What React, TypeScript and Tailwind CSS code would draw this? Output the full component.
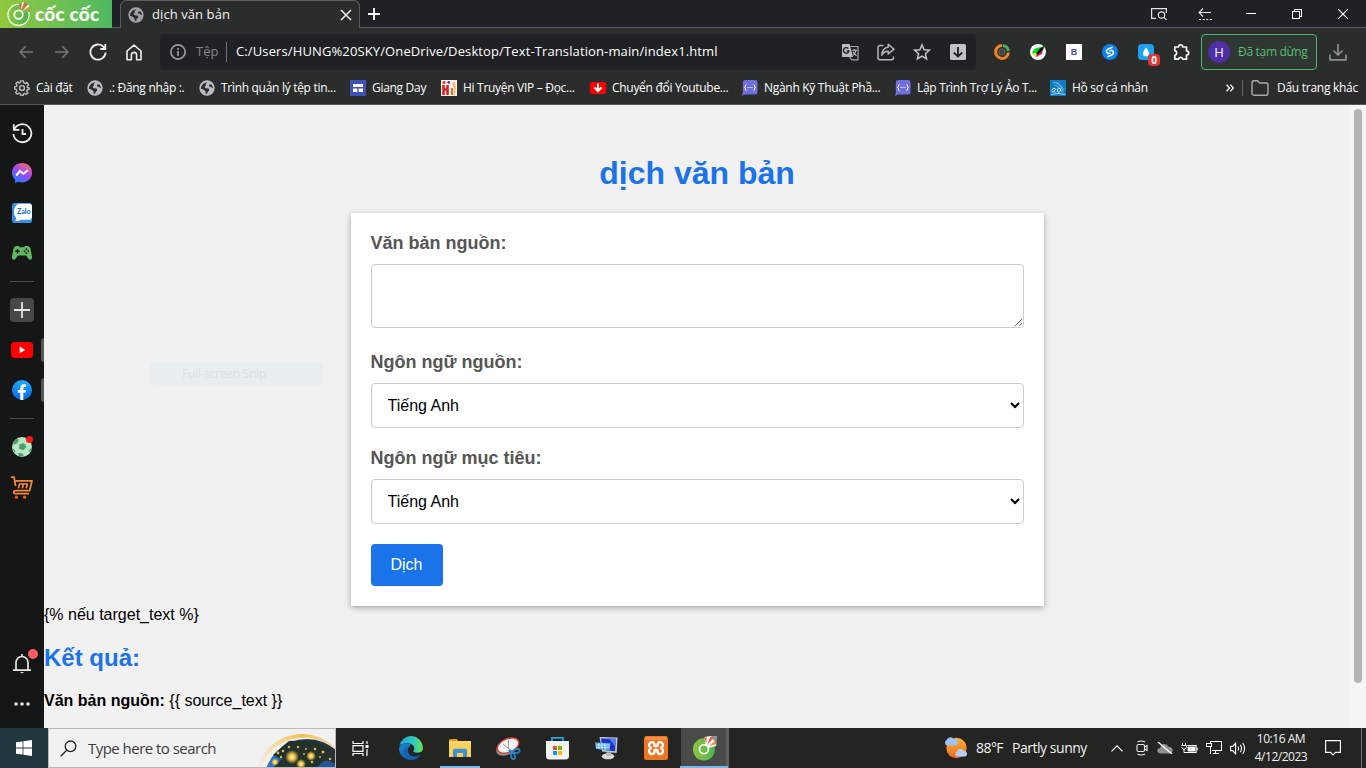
import React from "react";

type Kids = { children?: React.ReactNode };

function Slot({ children }: Kids) {
  return <div className="flex h-9 w-9 shrink-0 items-center justify-center">{children}</div>;
}

function Globe({ color = "#b9bcc4" }: { color?: string }) {
  return (
    <svg width="16" height="16" viewBox="0 0 16 16" className="shrink-0">
      <circle cx="8" cy="8" r="7.2" fill={color} />
      <path d="M8.2 2.2 6.6 4.2 7.2 5.4 5.4 6.8 6.6 8.2 9.6 8.6 10.4 10.4 8.8 11.6 8.2 13.8 6.4 13.4 6.6 11.2 4.2 9.4 2 8.8 2.2 6.4 4.4 3.4Z" fill="#2b2d2c" />
      <path d="M10 4.6 12.6 4.4 13.8 6.8 13.6 8.2 12 7 10.2 6.6Z" fill="#2b2d2c" />
      <circle cx="8" cy="8" r="6.9" fill="none" stroke={color} strokeWidth="1.5" />
    </svg>
  );
}

function CocMark({ size, white = false }: { size: number; white?: boolean }) {
  return (
    <svg width={size} height={size} viewBox="0 0 24 24" className="shrink-0">
      <defs>
        <linearGradient id="leaf" x1="0" y1="0" x2="1" y2="0">
          <stop offset="0" stopColor="#8fc63f" />
          <stop offset="1" stopColor="#46b450" />
        </linearGradient>
      </defs>
      <circle cx="11.5" cy="12.8" r="10.6" fill="url(#leaf)" stroke="#fff" strokeWidth={white ? 1.1 : 0} />
      <path d="M13 9 12 1 18 0 24 0 23.5 9.5 15 11.5Z" fill={white ? "#74be57" : "#fff"} />
      <path d="M18.5 0H24V10.5L23 9.8Q22 4 18.5 2Z" fill={white ? "#74be57" : "#494a49"} opacity=".6" />
      <circle cx="11.5" cy="12.6" r="4.3" fill="none" stroke="#fff" strokeWidth="1.7" />
      <path d="M12 1.5 14.4 1.2 13.6 7.4Z" fill="#f15a3a" />
      <path d="M17.4 .8 20.6 2 14.8 8.4Z" fill="#f15a3a" />
      <path d="M21.8 4.8 23 7.6 16.2 9.8Z" fill="#f58a3a" />
      {white && <path d="M15 .6 17 .6 14.2 7.6ZM21.2 2.4 22.4 4.2 15.6 9Z" fill="#fff" />}
    </svg>
  );
}

function TitleBar() {
  return (
    <header className="flex h-7 shrink-0 bg-[#202124]">
      <div className="flex w-28 items-center bg-linear-to-r from-[#91c83e] to-[#4cb960] pl-[7px]">
        <CocMark size={24} white />
        <span className="ml-1 whitespace-nowrap font-[Lato] text-[19px] leading-7 font-black tracking-[0.2px] text-white">cốc cốc</span>
      </div>
      <div className="w-2 border-b border-[#5c5e60]" />
      <div className="flex w-60 items-center rounded-t-md border border-b-0 border-[#5c5e60] bg-[#2b2d2c] pl-[7px] pr-[7px]">
        <Globe color="#9fa1a6" />
        <span className="ml-2 flex-1 whitespace-nowrap text-[13px] tracking-[0.08px] text-[#f1f1f1]">dịch văn bản</span>
        <svg width="12" height="12" viewBox="0 0 12 12" stroke="#f0f0f0" strokeWidth="1.5"><path d="M1 1 11 11M11 1 1 11" /></svg>
      </div>
      <div className="flex flex-1 items-center border-b border-[#5c5e60] pl-2">
        <svg width="12" height="12" viewBox="0 0 12 12" stroke="#fff" strokeWidth="1.8"><path d="M6 0V12M0 6H12" /></svg>
        <div className="ml-auto flex">
          <div className="flex w-[46px] justify-center">
            <svg width="18" height="14" viewBox="0 0 18 14" fill="none" stroke="#e4e4e4" strokeWidth="1.2"><path d="M6 11.4H1.6V1.6H16.4V6" /><circle cx="11.5" cy="8" r="3.2" /><path d="m14 10.3 2.6 2.6" /></svg>
          </div>
          <div className="flex w-[46px] justify-center">
            <svg width="14" height="14" viewBox="0 0 14 14" fill="none" stroke="#e4e4e4" strokeWidth="1.1"><path d="M13 5.5H1M5 1.5 1 5.5 5 9.5" /><path d="M1 12.5H14" strokeDasharray="2.2 1.4" /></svg>
          </div>
          <div className="flex w-[46px] items-center justify-center"><div className="h-px w-2.5 bg-white" /></div>
          <div className="flex w-[46px] items-center justify-center">
            <svg width="10" height="10" viewBox="0 0 10 10" fill="none" stroke="#fff" shapeRendering="crispEdges"><path d="M.5 2.5H7.5V9.5H.5ZM2.5 2.5V.5H9.5V7.5H7.5" /></svg>
          </div>
          <div className="flex w-[46px] items-center justify-center">
            <svg width="10" height="10" viewBox="0 0 10 10" stroke="#fff" strokeWidth="1.1"><path d="M0 0 10 10M10 0 0 10" /></svg>
          </div>
        </div>
      </div>
    </header>
  );
}

function Toolbar() {
  return (
    <div className="flex h-12 shrink-0 items-center pl-2 pr-[10px]">
      <Slot><svg width="14" height="14" viewBox="0 0 14 14" fill="none" stroke="#747675" strokeWidth="1.5"><path d="M14 7H1M7 1 1 7 7 13" /></svg></Slot>
      <Slot><svg width="14" height="14" viewBox="0 0 14 14" fill="none" stroke="#747675" strokeWidth="1.5"><path d="M0 7H13M7 1 13 7 7 13" /></svg></Slot>
      <Slot><svg width="18" height="18" viewBox="0 0 18 18" fill="none" stroke="#eee" strokeWidth="1.8"><path d="M16.6 9.5A7.6 7.6 0 1 1 14.6 3.9L16 5.4" /><path d="M16.3 1V6H11.3" /></svg></Slot>
      <Slot><svg width="16" height="17" viewBox="0 0 16 17" fill="none" stroke="#eee" strokeWidth="1.6" strokeLinejoin="round"><path d="M1 7 8 1.2 15 7V15.8H10.6V11A2.6 2.6 0 0 0 5.4 11V15.8H1Z" /></svg></Slot>
      <div className="ml-2 flex h-9 w-[816px] shrink-0 items-center rounded bg-[#202124]">
        <Slot><svg width="16" height="16" viewBox="0 0 16 16" fill="none" stroke="#9a9c9f" strokeWidth="1.7"><circle cx="8" cy="8" r="7.1" /><path d="M8 7V12M8 4V5.7" /></svg></Slot>
        <span className="w-[30px] text-[13px] text-[#85878a]">Tệp</span>
        <div className="h-5 w-px bg-[#707274]" />
        <span className="ml-[9px] flex-1 whitespace-nowrap text-[13px] tracking-[0.12px] text-white">C:/Users/HUNG%20SKY/OneDrive/Desktop/Text-Translation-main/index1.html</span>
        <Slot>
          <svg width="18" height="18" viewBox="0 0 18 18"><path d="M1.6 1H8.7L12 14H1.6Q1 14 1 13.4V1.6Q1 1 1.6 1Z" fill="#bdbdbd" /><path d="M9.6 3.5H17V16.8H10.8L8.6 14.2" fill="none" stroke="#a9a9a9" strokeWidth="1.2" /><path d="M7.4 5.6A2.8 2.8 0 1 0 8 7.9H5.4" fill="none" stroke="#202124" strokeWidth="1.4" /><path d="M11 7.3H16M13.3 5.9V7.3M15 7.3Q14.3 10.5 12 12.4M11.9 8.9 15.5 12.8" fill="none" stroke="#bdbdbd" strokeWidth="1.1" /></svg>
        </Slot>
        <Slot>
          <svg width="18" height="18" viewBox="0 0 18 18" fill="none" stroke="#b8b8b8" strokeWidth="1.5" strokeLinejoin="round"><path d="M6.5 2.5H3A2 2 0 0 0 1 4.5V14.8A2 2 0 0 0 3 16.8H14.5A2 2 0 0 0 16.5 14.8V13.5" /><path d="M11.2 1.2 17 6.2 11.2 11V8.3Q7.3 8 4.8 12.2 5.4 4.7 11.2 4.2Z" /></svg>
        </Slot>
        <Slot><svg width="18" height="18" viewBox="0 0 18 18" fill="none" stroke="#c4c4c4" strokeWidth="1.5"><path d="m9 1.8 2.1 5 5.3.4-4 3.5 1.2 5.2L9 13.1l-4.6 2.8 1.2-5.2-4-3.5 5.3-.4Z" /></svg></Slot>
        <Slot><svg width="16" height="16" viewBox="0 0 16 16"><rect width="16" height="16" rx="1.5" fill="#c2c2c2" /><path d="M8 3V12.5M3.8 8.5 8 12.6 12.2 8.5" fill="none" stroke="#202124" strokeWidth="1.8" /></svg></Slot>
      </div>
      <div className="ml-2 flex">
        <Slot><svg width="16" height="16" viewBox="0 0 16 16"><g fill="none" strokeWidth="3"><path d="M8 1.6A6.4 6.4 0 1 0 14.4 8.5" stroke="#f58220" /><path d="M8.8 1.6A6.4 6.4 0 0 1 14.4 7" stroke="#4caf50" /></g><circle cx="8" cy="8" r="3.6" fill="#5a5f63" /><ellipse cx="8" cy="8" rx="1.4" ry="2.1" fill="none" stroke="#2b2d2c" /></svg></Slot>
        <Slot><svg width="16" height="16" viewBox="0 0 16 16"><circle cx="8" cy="8" r="8" fill="#fff" /><path d="M2 9.5Q3 4 9 3.6L13.8 2.2 8 9Z" fill="#00d82c" /><path d="M2.2 10 6.4 8.4 5.6 12.5Z" fill="#fff000" /><path d="M5.5 13.5 8 8 13.4 3.5 12 10Z" fill="#f0146e" /><path d="M5.8 10.2 9.6 4.8 14 2 13.2 5.6 8 10.6Z" fill="#111" /></svg></Slot>
        <Slot><div className="flex h-4 w-4 items-center justify-center bg-white font-['Liberation_Sans'] text-[9px] leading-4 font-bold text-[#5046b0]">B</div></Slot>
        <Slot><svg width="16" height="16" viewBox="0 0 16 16"><circle cx="8" cy="8" r="8" fill="#0a84f5" /><g transform="rotate(14 8 8)" fill="none" stroke="#fff" strokeWidth="1.6" strokeLinecap="round"><path d="M8.8 3.2 5.6 5.4Q3.4 7.3 5.2 9.2 6.6 10.4 8.2 9.2" /><path d="M7.2 12.8 10.4 10.6Q12.6 8.7 10.8 6.8 9.4 5.6 7.8 6.8" /></g></svg></Slot>
        <Slot>
          <div className="relative h-4 w-4 rounded-sm bg-[#1da1f2]">
            <svg width="16" height="16" viewBox="0 0 16 16"><path d="M8 3.5Q11 7.5 11 9.4A3 3 0 0 1 5 9.4Q5 7.5 8 3.5Z" fill="#fff" /></svg>
            <div className="absolute top-2.5 left-2.5 flex h-3 w-3 items-center justify-center rounded-sm bg-[#e53535] text-[10px] leading-3 font-bold text-white">0</div>
          </div>
        </Slot>
        <Slot><svg width="18" height="18" viewBox="0 0 18 18" fill="none" stroke="#f2f2f2" strokeWidth="1.7" strokeLinejoin="round"><path d="M1.8 4H5.5A2.1 2.1 0 0 1 9.7 4H13.5V7.8A2.2 2.2 0 0 1 13.5 12.2V16.2H9.9A2.3 2.3 0 0 0 5.4 16.2H1.8V12.4A2.4 2.4 0 0 0 1.8 7.7Z" /></svg></Slot>
      </div>
      <div className="ml-px flex h-9 w-[116px] shrink-0 items-center rounded border border-[#52b36b] bg-[#2e3731] pl-1.5">
        <div className="flex h-[22px] w-[22px] items-center justify-center rounded-full bg-[#512da8] text-[13px] leading-none text-white">H</div>
        <span className="ml-2 whitespace-nowrap text-xs tracking-[-0.3px] text-[#5bbd74]">Đã tạm dừng</span>
      </div>
      <div className="ml-3 flex"><svg width="18" height="17" viewBox="0 0 18 17" fill="none" stroke="#8d8f8e" strokeWidth="1.7"><path d="M9 0V10.5M4.5 6.5 9 11 13.5 6.5M1 10.5V15.8H17V10.5" /></svg></div>
    </div>
  );
}

const CodeIcon = () => (
  <svg width="16" height="16" viewBox="0 0 16 16" className="shrink-0"><path d="M3 0H13Q15.5 0 15.5 2.5V12Q15.5 14.5 13 14.5H3L0 16 .8 13V2.5Q.8 0 3 0Z" fill="#6f6fe0" /><path d="M4.5 4.5Q3.4 4.5 3.4 6 3.4 7.5 2.4 7.5 3.4 7.5 3.4 9 3.4 10.5 4.5 10.5M11.5 4.5Q12.6 4.5 12.6 6 12.6 7.5 13.6 7.5 12.6 7.5 12.6 9 12.6 10.5 11.5 10.5M5.6 7.5H6.6M7.5 7.5H8.5M9.4 7.5H10.4" fill="none" stroke="#fff" /></svg>
);

function Mark({ icon, w, children }: Kids & { icon: React.ReactNode; w: string }) {
  return (
    <div className="flex shrink-0 items-center gap-1.5">
      {icon}
      <span className={`${w} whitespace-nowrap`}>{children}</span>
    </div>
  );
}

function Bookmarks() {
  return (
    <div className="flex h-[29px] shrink-0 gap-[14px] border-b border-[#565857] pl-[14px] pb-[5px] text-xs tracking-[-0.3px] text-white">
      <Mark w="w-[37px]" icon={
        <svg width="16" height="16" viewBox="0 0 18 18" fill="none" stroke="#b9bab9" strokeWidth="1.6" strokeLinejoin="round"><path d="M7.4 1H10.6L11 3.2 12.8 4 14.6 2.7 16.3 5.4 14.8 7 15 8.2 17 9 17 10.4 15 11 14.3 12.8 15.6 14.6 13.6 16.3 11.9 15.1 10.7 15.6 10.3 17.3H7.6L7.2 15.4 5.6 14.7 3.8 15.9 1.9 14 3.2 12.2 2.6 10.6.8 10.2V7.6L2.8 7.2 3.4 5.7 2.2 3.9 4.2 2.1 5.8 3.4 7 2.9Z" /><circle cx="9" cy="9.1" r="2.8" /></svg>
      }>Cài đặt</Mark>
      <Mark w="w-[76px]" icon={<Globe />}>.: Đăng nhập :.</Mark>
      <Mark w="w-[115px]" icon={<Globe />}>Trình quản lý tệp tin...</Mark>
      <Mark w="w-[55px]" icon={<svg width="16" height="16" viewBox="0 0 16 16"><path fill="#3f51b5" d="M0 0H16V16H0Z" /><path fill="#fff" d="M3 4H13V7H3ZM3 8.5H7.3V12H3ZM8.7 8.5H13V12H8.7Z" /></svg>}>Giang Day</Mark>
      <Mark w="w-[113px]" icon={<svg width="16" height="16" viewBox="0 0 16 16"><path fill="#fff4ea" d="M0 0H16V16H0Z" /><path d="M2.5 5V15M2.5 9.5H7.5M6.5 5V15" stroke="#d8232a" strokeWidth="2.6" /><path d="M11 8V15" stroke="#e8741e" strokeWidth="2" /><circle cx="3" cy="2.5" r="1.6" fill="#e8332a" /><circle cx="7.8" cy="2.4" r="1.4" fill="#6b2b8e" /><path d="M11 3 14 2 14.8 7 14 15H12.5L13 8Z" fill="#f2b07a" /></svg>}>Hi Truyện VIP – Đọc...</Mark>
      <Mark w="w-[116px]" icon={<svg width="16" height="16" viewBox="0 0 16 16"><rect y="2" width="16" height="12" rx="2" fill="#f00" /><path d="M8 3.5V10M4.5 7.5 8 11 11.5 7.5" stroke="#fff" strokeWidth="2" fill="none" /></svg>}>Chuyển đổi Youtube...</Mark>
      <Mark w="w-[117px]" icon={<CodeIcon />}>Ngành Kỹ Thuật Phầ...</Mark>
      <Mark w="w-[119px]" icon={<CodeIcon />}>Lập Trình Trợ Lý Ảo T...</Mark>
      <Mark w="w-[76px]" icon={<svg width="16" height="16" viewBox="0 0 16 16"><path fill="#0f7cc0" d="M0 0H16V16H0Z" /><path d="M3 2Q10 3 13.5 12M6 2Q11 4 14 10M4 5Q10 6 12.5 13" stroke="#6bb8e6" fill="none" strokeWidth=".9" /><path d="M1 14.4Q8 12.6 15 14.4" stroke="#cfe8f7" fill="none" strokeWidth=".8" /><path d="M5.5 12Q1.5 12.4 1.8 10.2 2.6 8 5 8.4 6.6 9.4 4 10.6M9 12.4Q6.5 11.6 7.3 9.4 8.6 7.4 10.3 8.8 11.2 11.4 9 12.4Z" stroke="#fff" fill="none" strokeWidth=".9" /></svg>}>Hồ sơ cá nhân</Mark>
      <div className="ml-auto flex items-center pr-2">
        <svg width="8" height="8" viewBox="0 0 8 8" fill="none" stroke="#eee" strokeWidth="1.4"><path d="M.5.8 3.5 4 .5 7.2M4.3.8 7.3 4 4.3 7.2" /></svg>
        <div className="ml-2 h-4 w-px bg-[#606261]" />
        <svg width="18" height="16" viewBox="0 0 18 16" fill="none" stroke="#a9abaa" strokeWidth="1.4" className="mx-2 shrink-0"><path d="M1 3Q1 .8 3 .8H6.5L8.5 3H15Q17 3 17 5V13Q17 15.2 15 15.2H3Q1 15.2 1 13Z" /></svg>
        <span className="w-[81px] whitespace-nowrap tracking-[-0.27px]">Dấu trang khác</span>
      </div>
    </div>
  );
}

function SideItem({ children, pill = false }: Kids & { pill?: boolean }) {
  return (
    <div className="relative flex h-10 w-11 shrink-0 items-center justify-center">
      {children}
      {pill && <div className="absolute right-0 top-2 h-6 w-[3px] rounded-l bg-[#555756]" />}
    </div>
  );
}

function Sidebar() {
  return (
    <nav className="flex w-11 shrink-0 flex-col bg-[#151716] pt-2 pb-1">
      <SideItem><svg width="21" height="21" viewBox="0 0 21 21" fill="none" stroke="#ececec" strokeWidth="1.8"><path d="M2.2 6.4A9 9 0 1 1 1.4 11" /><path d="M1.8 1.2V6.8H7.4M10.5 6V11H14" /></svg></SideItem>
      <SideItem>
        <svg width="20" height="20" viewBox="0 0 20 20"><defs><linearGradient id="msg" x1=".2" y1="1" x2=".8" y2="0"><stop stopColor="#1387ff" /><stop offset=".5" stopColor="#a044f5" /><stop offset="1" stopColor="#ff6a72" /></linearGradient></defs><path d="M10 0C4.2 0 0 4.2 0 9.7 0 12.6 1.2 15 3.1 16.7V20L6.5 18.8C7.6 19.2 8.8 19.4 10 19.4 15.8 19.4 20 15.2 20 9.7S15.8 0 10 0Z" fill="url(#msg)" /><path d="M4.2 12.5 8 8 11.4 10.7 15.8 7.2" fill="none" stroke="#fff" strokeWidth="2.1" /></svg>
      </SideItem>
      <SideItem>
        <svg width="20" height="20" viewBox="0 0 20 20"><rect width="20" height="20" rx="2.5" fill="#3a8fdd" /><path d="M6.5 .8H17Q20 .8 20 4V13Q20 16.8 17 16.8H9Q5.5 18.6 3.2 17.8 5 16.8 4 15 1.6 12 2 8 2.2 3 6.5 .8Z" fill="#fff" /><text x="5" y="11.4" fontSize="7.2" fontWeight="900" fill="#1b74d0" fontFamily="Lato" textLength="13.6">Zalo</text></svg>
      </SideItem>
      <SideItem>
        <svg width="20" height="14" viewBox="0 0 20 14"><path d="M5 0H7Q7.5 1.2 8.5 1.2H11.5Q12.5 1.2 13 0H15Q18 0 18.6 3L20 11Q20 13.8 18 13.8 16.6 13.5 14.2 9.4H5.8Q3.4 13.5 2 13.8 0 13.8 0 11L1.4 3Q2 0 5 0Z" fill="#5fba60" /><path d="M5.5 3V7.4M3.3 5.2H7.7" stroke="#151716" strokeWidth="1.5" /><g fill="#151716"><circle cx="14.3" cy="3.2" r=".9" /><circle cx="14.3" cy="7" r=".9" /><circle cx="12.4" cy="5.1" r=".9" /><circle cx="16.2" cy="5.1" r=".9" /></g></svg>
      </SideItem>
      <div className="flex h-[17px] items-center justify-center"><div className="h-px w-6 bg-[#4b4d4c]" /></div>
      <SideItem><div className="flex h-6 w-6 items-center justify-center rounded bg-[#464847]"><svg width="16" height="16" viewBox="0 0 16 16" stroke="#e6e6e6" strokeWidth="1.8"><path d="M8 0V16M0 8H16" /></svg></div></SideItem>
      <SideItem pill><svg width="22" height="16" viewBox="0 0 22 16"><rect width="22" height="16" rx="3.5" fill="#f00" /><path d="M8.7 4.6 14.2 8 8.7 11.2Z" fill="#fff" /></svg></SideItem>
      <SideItem pill><svg width="20" height="20" viewBox="0 0 20 20"><defs><linearGradient id="fb" x2="0" y2="1"><stop stopColor="#1fadfb" /><stop offset="1" stopColor="#0866e6" /></linearGradient></defs><circle cx="10" cy="10" r="10" fill="url(#fb)" /><path d="M8.3 20V12.8H5.8V9.9H8.3V7.8Q8.3 4.2 11.8 4.2 12.9 4.2 14 4.4V7H12.6Q11.3 7 11.3 8.3V9.9H13.9L13.4 12.8H11.3V20Z" fill="#fff" /></svg></SideItem>
      <div className="flex h-[17px] items-center justify-center"><div className="h-px w-6 bg-[#4b4d4c]" /></div>
      <SideItem>
        <svg width="20" height="20" viewBox="0 0 20 20"><circle cx="10" cy="10" r="10" fill="#b9e6c5" /><g fill="#4d9e6b"><path d="M7.5 7.2 12 6 14.5 10 11 13.3 7 11.5ZM1 5.5 4 2 7 2.2 5.5 6 1.5 8ZM13 1 17.5 3.5 15 5ZM20 10 16.8 13.2 18 15.5ZM6 16 10.5 16.3 12 19.5 7 19.5ZM.3 11 3.2 13.6 3 16.5Z" /></g></svg>
        <div className="absolute top-[9px] left-[26px] h-[7px] w-[7px] rounded-full bg-[#ff1616]" />
      </SideItem>
      <SideItem><svg width="22" height="23" viewBox="0 0 22 23" fill="none" stroke="#f5893b" strokeWidth="1.8" strokeLinejoin="round"><path d="M0 1.2H3L4.6 10M4.6 4.8H21L18.6 14.6H4.6Q3 14.6 2.6 16.2 2.6 17.6 4.2 17.6H18" /><path d="M7.4 12.4 8.6 8H16.4L15.2 12.4M12.5 8 11.3 12.4" strokeWidth="1.7" /><g fill="#f0582e" stroke="none"><circle cx="5.4" cy="21.2" r="1.6" /><circle cx="13.6" cy="21.2" r="1.6" /></g></svg></SideItem>
      <div className="mt-auto" />
      <SideItem>
        <svg width="18" height="20" viewBox="0 0 18 20" fill="none" stroke="#e6e6e6" strokeWidth="1.7"><path d="M0 16.2H18M3 16V8.5A6 6 0 0 1 15 8.5V16M9 0V2.5" /><path d="M7 18H11L9 19.6Z" fill="#e6e6e6" stroke="none" /></svg>
        <div className="absolute top-[5px] left-7 h-2.5 w-2.5 rounded-full bg-[#ff5a62]" />
      </SideItem>
      <SideItem><svg width="16" height="4" viewBox="0 0 16 4" fill="#e4e4e4"><circle cx="2" cy="2" r="1.8" /><circle cx="8" cy="2" r="1.8" /><circle cx="14" cy="2" r="1.8" /></svg></SideItem>
    </nav>
  );
}

function LanguageSelect() {
  return (
    <select className="mb-5 block h-[45px] w-full rounded border border-[#ccc] bg-white p-3 text-base leading-[19px] text-black">
      <option>Tiếng Anh</option>
    </select>
  );
}

function TranslatePage() {
  return (
    <main className="relative flex min-w-0 flex-1 overflow-hidden bg-[#f1f1f1] font-['Liberation_Sans',sans-serif] text-base leading-[18px] text-black">
      <div className="flex-1">
        <h1 className="mt-[50px] mb-[21px] text-center text-[32px] leading-[37px] font-bold text-[#1a73e8]">dịch văn bản</h1>
        <form className="mx-auto w-[693px] bg-white p-5 shadow-[0_2px_6px_rgba(0,0,0,0.3)]">
          <label className="mb-2.5 block text-lg leading-[21px] font-bold text-[#555]">Văn bản nguồn:</label>
          <textarea className="mb-6 block h-16 w-full resize rounded border border-[#ccc] bg-white p-3" />
          <label className="mb-2.5 block text-lg leading-[21px] font-bold text-[#555]">Ngôn ngữ nguồn:</label>
          <LanguageSelect />
          <label className="mb-2.5 block text-lg leading-[21px] font-bold text-[#555]">Ngôn ngữ mục tiêu:</label>
          <LanguageSelect />
          <button type="button" className="block h-[42px] w-[72px] rounded bg-[#1a73e8] text-base leading-[18px] text-white">Dịch</button>
        </form>
        <div>{"{% nếu target_text %}"}</div>
        <h2 className="mt-5 mb-[21px] text-2xl leading-[27px] font-bold text-[#1a73e8]">Kết quả:</h2>
        <p className="mb-[17px]"><b>Văn bản nguồn:</b>{" {{ source_text }}"}</p>
        <p className="font-bold">Văn bản</p>
      </div>
      <div className="w-4 bg-[#f5f5f5] pt-1 pl-1"><div className="h-[574px] w-2 rounded bg-[#b4b4b4]" /></div>
      <div className="absolute top-[257px] left-[106px] h-[23px] w-[173px] rounded-sm bg-[#e9eef0] pl-8 font-['Open_Sans'] text-xs leading-[23px] tracking-[-0.25px] text-[#dcdfe1]">Full-screen Snip</div>
    </main>
  );
}

function TaskIcon({ children, open = false }: Kids & { open?: boolean }) {
  return (
    <div className="flex w-[49px] shrink-0 flex-col items-center">
      <div className="flex h-[38px] items-center justify-center pt-0.5">{children}</div>
      {open && <div className="h-0.5 w-10 bg-[#76b9ed]" />}
    </div>
  );
}

function Taskbar() {
  return (
    <footer className="flex h-10 shrink-0 bg-[#242423] text-[#f2f2f2]">
      <div className="flex w-12 items-center justify-center bg-[#21383f]">
        <svg width="16" height="16" viewBox="0 0 16 16" fill="#fff"><path d="M0 2.3 6.6 1.4V7.6H0ZM7.4 1.3 16 0V7.6H7.4ZM0 8.4H6.6V14.6L0 13.7ZM7.4 8.4H16V16L7.4 14.8Z" /></svg>
      </div>
      <div className="flex w-72 items-center border border-[#b9b9b9] bg-[#f1f1f1] pl-[11px]">
        <svg width="17" height="17" viewBox="0 0 17 17" fill="none" stroke="#222" strokeWidth="1.3"><circle cx="10.5" cy="6.3" r="5.3" /><path d="M6.7 10.2.7 16.2" /></svg>
        <span className="ml-[11px] whitespace-nowrap text-[15px] tracking-[-0.53px] text-[#3c3c3c]">Type here to search</span>
        <svg width="77" height="34" viewBox="0 0 77 34" className="ml-auto mt-1">
          <defs>
            <radialGradient id="sun"><stop stopColor="#fff7d0" /><stop offset=".4" stopColor="#f5c842" /><stop offset="1" stopColor="#f5c84200" /></radialGradient>
            <linearGradient id="halo" x1="0" x2="1"><stop stopColor="#f5c84200" /><stop offset=".5" stopColor="#f4bf4f" /><stop offset="1" stopColor="#f4bf4f33" /></linearGradient>
            <linearGradient id="earth" x1="0" x2="1"><stop stopColor="#2f7fdc" /><stop offset=".4" stopColor="#1c4468" /><stop offset="1" stopColor="#2d2a25" /></linearGradient>
          </defs>
          <circle cx="44" cy="48" r="47" fill="url(#halo)" /><circle cx="46" cy="51" r="46.5" fill="#f6f1e8" />
          <circle cx="49" cy="49" r="43" fill="url(#earth)" />
          <path d="M26 12 31 8 55 7 77 19V31L67 28 58 34H16L24 26 15 22Z" fill="#22312e" />
          <path d="M60 34Q66 23 77 31V34Z" fill="#24579a" />
          <circle cx="34" cy="24" r="7" fill="url(#sun)" /><circle cx="53" cy="23" r="5" fill="url(#sun)" /><circle cx="43" cy="31" r="5" fill="url(#sun)" /><circle cx="17" cy="29" r="4" fill="url(#sun)" />
          <g fill="#e6b53c"><circle cx="20" cy="20" r="1.4" /><circle cx="25" cy="18" r="1.3" /><circle cx="31" cy="14" r="1.2" /><circle cx="40" cy="14" r="1.2" /><circle cx="48" cy="16" r="1" /><circle cx="57" cy="16" r="1.3" /><circle cx="65" cy="19" r="1.5" /><circle cx="62" cy="24" r="1" /><circle cx="72" cy="26" r="1.2" /><circle cx="46" cy="21" r="1" /><circle cx="23" cy="24" r="1.2" /><circle cx="54" cy="29" r="1.3" /></g>
        </svg>
      </div>
      <div className="flex w-12 items-center justify-center">
        <svg width="17" height="17" viewBox="0 0 17 17" fill="none" stroke="#fff" strokeWidth="1.2"><path d="M1 1V3.5H11V1M1 16V13.5H11V16M1 5.6H11V11.4H1ZM15 1V4M15 9V16" /><path d="M13.5 5H16.5V8H13.5Z" fill="#fff" stroke="none" /></svg>
      </div>
      <div className="flex pl-0.5">
        <TaskIcon>
          <svg width="24" height="24" viewBox="0 0 24 24"><defs><linearGradient id="e1" x1="0" x2="1"><stop stopColor="#1e9fe0" /><stop offset=".6" stopColor="#32c8c0" /><stop offset="1" stopColor="#6be04e" /></linearGradient><linearGradient id="e2" x2="1" y2="1"><stop stopColor="#1b8ad6" /><stop offset="1" stopColor="#0c4a94" /></linearGradient></defs><path d="M0 12A12 12 0 0 0 20.5 20.5Q15 22.8 11 19.5 8.3 16.5 9 12.5L12 8.5Q3 5.5 0 12Z" fill="url(#e2)" /><path d="M.2 10A12 12 0 0 1 24 11.5Q24 16.7 18.4 16.7 14.4 16.7 14.2 15.1 15.5 14 15.3 12 14.5 7.6 9 7.2 3 7 .2 10Z" fill="url(#e1)" /><path d="M9.5 10.5Q7 15 10 18.5 14.5 22.5 21.8 18.5 22 19.5 18 22 11 25.5 6 20 2.5 14.5 9.5 10.5Z" fill="#1262b3" /></svg>
        </TaskIcon>
        <TaskIcon open>
          <svg width="22" height="19" viewBox="0 0 22 19"><path d="M1 0H8L9.5 2.5H0V1Z" fill="#e09a12" /><path d="M0 2H22V18H0Z" fill="#ffd666" /><path d="M0 6H22V18H0Z" fill="#fbca4c" opacity=".5" /><path d="M4 18V11Q4 9.7 5.3 9.7H16.7Q18 9.7 18 11V18H14V14H8V18Z" fill="#3d91d6" /></svg>
        </TaskIcon>
        <TaskIcon>
          <svg width="25" height="23" viewBox="0 0 25 23"><ellipse cx="11" cy="11" rx="11.3" ry="6.8" transform="rotate(-23 11 11)" fill="#8d8f91" /><ellipse cx="12" cy="8.6" rx="11.3" ry="6.8" transform="rotate(-23 12 8.6)" fill="#f4f4f4" stroke="#d6403a" strokeWidth="1.4" /><path d="m7 7 9 7M12.5 3V12" stroke="#999" /><g fill="none" stroke="#2186c8" strokeWidth="1.7"><ellipse cx="20.5" cy="14" rx="3.2" ry="2" transform="rotate(-15 20.5 14)" /><ellipse cx="17" cy="19.2" rx="2" ry="3" transform="rotate(-15 17 19.2)" /><path d="m17.5 14.8-5-1.5M16.5 16.3 13 13.5" /></g></svg>
        </TaskIcon>
        <TaskIcon>
          <svg width="23" height="24" viewBox="0 0 23 24"><path d="M6 6V1.8H17V6" fill="none" stroke="#22a7e8" strokeWidth="1.8" /><path d="M0 5H23V20Q23 23.5 19.5 23.5H3.5Q0 23.5 0 20Z" fill="#f2f2f2" /><path d="M7 10H11V14H7Z" fill="#f25022" /><path d="M12 10H16V14H12Z" fill="#7fba00" /><path d="M7 15H11V19H7Z" fill="#00a4ef" /><path d="M12 15H16V19H12Z" fill="#ffb900" /></svg>
        </TaskIcon>
        <TaskIcon>
          <svg width="24" height="24" viewBox="0 0 24 24"><path d="m4.5 1 18 .5-.8 15.5-14.7-1.4Z" fill="#c4cbd3" /><path d="m5.8 2.4 15 .4-.7 12.5-12-1.2Z" fill="#1c32c8" /><path d="m14 2.6 6.8.2-.4 8Z" fill="#4e80ea" /><path d="m0 6.5 15.5.8-1 7.3-13.5-1.5Z" fill="#5fa8e6" /><path d="M1 9H14.5M1 11.3H14.5M4 7V13M7 7V13.3M10 7.5V13.7" stroke="#dff" strokeWidth=".7" /><ellipse cx="13" cy="20.3" rx="6.3" ry="3" fill="#dadada" /><path d="m11.5 16 5 .5-.4 3.5H11.5Z" fill="#b8b8b8" /></svg>
        </TaskIcon>
        <TaskIcon>
          <svg width="24" height="24" viewBox="0 0 24 24"><rect width="24" height="24" rx="2.5" fill="#ee7623" /><path d="M2 1H22V4H2Z" fill="#f69e5c" opacity=".6" /><path d="M8 6.2Q4.6 6.6 5.2 9.6 5.6 11.4 7 12 5 12.8 5 15 5.2 18 8 18 10.6 18 10.6 15V14H13.4V15Q13.4 18 16 18 18.8 18 19 15 19 12.8 17 12 18.4 11.4 18.8 9.6 19.4 6.6 16 6.2 13.6 6.4 13.6 9V10H10.4V9Q10.4 6.4 8 6.2Z" fill="none" stroke="#fff" strokeWidth="2.3" strokeLinejoin="round" /></svg>
        </TaskIcon>
        <div className="ml-px flex w-12 flex-col items-center border-r-[3px] border-[#5d5e5d] bg-[#494a49]">
          <div className="flex h-[38px] items-center pt-0.5 pl-0.5"><CocMark size={25} /></div>
          <div className="h-0.5 w-12 bg-[#76b9ed]" />
        </div>
      </div>
      <div className="ml-auto flex items-center">
        <svg width="24" height="24" viewBox="0 0 24 24"><defs><linearGradient id="wx" x2="0" y2="1"><stop stopColor="#f9b233" /><stop offset="1" stopColor="#ee6b1f" /></linearGradient></defs><circle cx="12.5" cy="12" r="10.2" fill="url(#wx)" /><path d="M3 9.5A3 3 0 0 1 2.6 4 4 4 0 0 1 9.8 3 3.2 3.2 0 0 1 11.5 9.5Z" fill="#9ec2f4" /><path d="M13 20.5A2.8 2.8 0 0 1 13 15.3 4 4 0 0 1 20 15 2.9 2.9 0 0 1 21.5 20.5Z" fill="#b2cff8" /></svg>
        <span className="ml-2 w-9 whitespace-nowrap text-sm tracking-[-0.55px]">88°F</span>
        <span className="w-[99px] whitespace-nowrap text-sm tracking-[-0.47px]">Partly sunny</span>
        <svg width="12" height="7" viewBox="0 0 12 7" fill="none" stroke="#fff" strokeWidth="1.2"><path d="m.5 6.3 5.5-5.5 5.5 5.5" /></svg>
        <svg width="12" height="16" viewBox="0 0 12 16" fill="none" stroke="#eee" strokeWidth="1.1" className="ml-[13px]"><rect x="1" y="4.5" width="7.5" height="7" rx="1.5" /><path d="m8.5 7 2.5-1.5v5L8.5 9M1.5 2Q5 0 9 2M1.5 14Q5 16 9 14" /></svg>
        <svg width="16" height="12" viewBox="0 0 16 12" className="ml-[9px]"><path d="M3.5 11.5Q0 11 .3 8.3.8 6 3.2 6 4 2 7.5 2.1 10.3 2 11.4 4.8 15.5 5 15.7 8.3 15.5 11.5 12.5 11.5Z" fill="#929292" /><path d="M1 0 15 12" stroke="#fff" strokeWidth="1.3" /></svg>
        <svg width="17" height="13" viewBox="0 0 17 13" className="ml-2" fill="none" stroke="#fff"><path d="M1.5 1V3.5M4.5 1V3.5M.5 3.5H5.5V5.5L3 7.5.5 5.5M3 7V10.5H6" /><path d="M6.5 3.5H15V10.5H5.5" strokeWidth="1.2" /><path d="M7 5H13.5V9H7Z" fill="#fff" /><path d="M16.2 5.5V8.5" /></svg>
        <svg width="16" height="14" viewBox="0 0 16 14" className="ml-2" fill="none" stroke="#fff" shapeRendering="crispEdges"><path d="M4.5 2.5V.5H15.5V9.5H5.5M4.5 5V12.5M.5 2.5H5.5V5.5H.5ZM9.5 9.5V12.5M6.5 12.5H12.5" /></svg>
        <svg width="17" height="13" viewBox="0 0 17 13" className="ml-2" fill="none" stroke="#fff" strokeWidth="1.1"><path d="M.6 4.4H2.8L5.6 1.2V11.8L2.8 8.6H.6ZM8 4.5Q9.2 6.5 8 8.5M10.3 2.8Q12.7 6.5 10.3 10.2M12.7 1Q16.5 6.5 12.7 12" /></svg>
        <div className="ml-1.5 flex w-[56px] flex-col items-center text-xs leading-[18px] tracking-[-0.48px] whitespace-nowrap">
          <span>10:16 AM</span>
          <span>4/12/2023</span>
        </div>
        <svg width="16" height="16" viewBox="0 0 16 16" className="ml-4 mr-5" fill="none" stroke="#fff" strokeWidth="1.1"><path d="M.6.6H15.4V12.4H10.5L8 15 5.5 12.4H.6Z" /></svg>
        <div className="mr-1 h-10 w-px bg-[#6d6d6d]" />
      </div>
    </footer>
  );
}

export default function App() {
  return (
    <div className="flex h-[768px] w-[1366px] flex-col overflow-hidden bg-[#2b2d2c] font-['Open_Sans',sans-serif]">
      <TitleBar />
      <Toolbar />
      <Bookmarks />
      <div className="flex min-h-0 flex-1">
        <Sidebar />
        <TranslatePage />
      </div>
      <Taskbar />
    </div>
  );
}
